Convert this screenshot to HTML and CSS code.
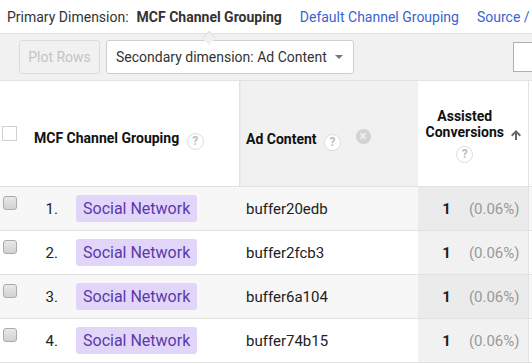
FILE: index.html
```html
<!DOCTYPE html>
<html lang="en">

<head>
    <meta charset="UTF-8">
    <title>MCF Channel Grouping</title>
    <link rel="stylesheet" href="styles.css">
</head>

<body>
    <div class="dimension-bar">
        <span class="dimension-label">Primary Dimension:</span>
        <span class="dimension-item selected">MCF Channel Grouping</span>
        <a class="dimension-item">Default Channel Grouping</a>
        <a class="dimension-item">Source / Medium</a>
    </div>

    <div class="toolbar">
        <button class="plot-btn" disabled>Plot Rows</button>
        <div class="secondary-select">
            <span>Secondary dimension: Ad Content</span>
            <span class="caret"></span>
        </div>
        <div class="search-box"></div>
    </div>

    <table class="report">
        <colgroup>
            <col class="col-check">
            <col class="col-num">
            <col class="col-channel">
            <col class="col-ad">
            <col class="col-assisted">
            <col class="col-next">
        </colgroup>
        <thead>
            <tr>
                <th class="head-check"><span class="box"></span></th>
                <th colspan="2" class="head-label">MCF Channel Grouping <span class="help">?</span></th>
                <th class="head-label secondary">Ad Content <span class="help">?</span> <span class="remove">&times;</span></th>
                <th class="head-sorted">
                    <div class="sorted-wrap">
                        <div class="sorted-text">Assisted<br>Conversions<br><span class="help">?</span></div>
                        <svg class="sort-arrow" width="12" height="12" viewBox="0 0 12 12"><path d="M6 1 L1 6 L2.4 7.4 L5 4.8 L5 11 L7 11 L7 4.8 L9.6 7.4 L11 6 Z" fill="#666"/></svg>
                    </div>
                </th>
                <th class="next"></th>
            </tr>
        </thead>
        <tbody id="table-body"></tbody>
    </table>

    <script>
        const rows = ['buffer20edb', 'buffer2fcb3', 'buffer6a104', 'buffer74b15'];
        const tableBody = document.getElementById('table-body');

        rows.forEach((ad, index) => {
            const row = tableBody.insertRow();
            row.innerHTML =
                '<td class="cell-check"><span class="row-box"></span></td>' +
                '<td class="cell-num">' + (index + 1) + '.</td>' +
                '<td class="cell-channel"><span class="chip">Social Network</span></td>' +
                '<td class="cell-ad">' + ad + '</td>' +
                '<td class="cell-sorted"><b>1</b><span class="pct">(0.06%)</span></td>' +
                '<td class="next"></td>';
        });
    </script>
</body>

</html>
```

FILE: styles.css
```css
body {
    font-family: 'Roboto', 'Liberation Sans', sans-serif;
    font-size: 14px;
    color: #222;
    margin: 0;
    background-color: #fff;
    overflow: hidden;
}

.dimension-bar {
    height: 33px;
    display: flex;
    align-items: center;
    padding-left: 7px;
    white-space: nowrap;
    border-bottom: 1px solid #e2e2e2;
}

.dimension-label {
    color: #333;
    margin-right: 8px;
}

.dimension-item {
    color: #3a64d0;
    margin-right: 18px;
    flex-shrink: 0;
}

.dimension-item.selected {
    color: #333;
    font-weight: bold;
    position: relative;
}

/* little notch pointing at the selected dimension */
.dimension-item.selected::after {
    content: "";
    position: absolute;
    left: 67px;
    top: 24px;
    width: 9px;
    height: 9px;
    background-color: #f1f1f1;
    border-top: 1px solid #dcdcdc;
    border-left: 1px solid #dcdcdc;
    transform: rotate(45deg);
}

.toolbar {
    height: 46px;
    background-color: #f1f1f1;
    display: flex;
    align-items: center;
    padding-left: 19px;
    border-bottom: 1px solid #e2e2e2;
    white-space: nowrap;
}

.plot-btn {
    flex-shrink: 0;
    font-family: inherit;
    font-size: 14px;
    width: 81px;
    height: 34px;
    padding: 0;
    color: #c4c4c4;
    background-color: #f1f1f1;
    border: 1px solid #dcdcdc;
    border-radius: 3px;
}

.secondary-select {
    flex-shrink: 0;
    margin-left: 6px;
    width: 248px;
    height: 34px;
    box-sizing: border-box;
    background-color: #fff;
    border: 1px solid #cfcfcf;
    border-radius: 3px;
    display: flex;
    align-items: center;
    justify-content: space-between;
    padding: 0 10px 0 9px;
    color: #333;
}

.caret {
    width: 0;
    height: 0;
    border-left: 4px solid transparent;
    border-right: 4px solid transparent;
    border-top: 4px solid #777;
}

.search-box {
    flex-shrink: 0;
    margin-left: 159px;
    width: 40px;
    height: 28px;
    background-color: #fff;
    border: 1px solid #b0b0b0;
}

.report {
    border-collapse: collapse;
    table-layout: fixed;
    width: 600px;
}

.col-check { width: 34px; }
.col-num { width: 36px; }
.col-channel { width: 169px; }
.col-ad { width: 179px; }
.col-assisted { width: 110px; }
.col-next { width: 72px; }

th {
    height: 93px;
    padding: 0;
    text-align: left;
    font-weight: bold;
    color: #111;
    border-bottom: 1px solid #e2e2e2;
    vertical-align: middle;
}

.head-check {
    padding-left: 2px;
}

.box {
    display: block;
    width: 13px;
    height: 13px;
    border: 1px solid #d0d0d0;
    background-color: #fff;
}

.head-label {
    padding-top: 12px;
}

.head-label.secondary {
    background-color: #f1f1f1;
    padding-left: 7px;
    box-shadow: inset 2px 0 2px -1px #dcdcdc;
}

.help {
    display: inline-block;
    width: 15px;
    height: 15px;
    border: 1.5px solid #dcdcdc;
    border-radius: 50%;
    color: #bdbdbd;
    font-size: 12px;
    font-weight: bold;
    line-height: 15px;
    text-align: center;
    margin-left: 4px;
    vertical-align: -2px;
    background-color: #fff;
}

.remove {
    display: inline-block;
    width: 15px;
    height: 15px;
    border-radius: 50%;
    background-color: #d2d2d2;
    color: #eee;
    font-size: 14px;
    line-height: 15px;
    text-align: center;
    margin-left: 11px;
    vertical-align: 3px;
}

.head-sorted {
    padding-top: 4px;
}

.sorted-wrap {
    display: flex;
    justify-content: center;
    align-items: flex-start;
    padding-left: 2px;
}

.sorted-text {
    text-align: center;
    line-height: 16px;
}

.sorted-text .help {
    margin: 6px 0 0 0;
}

.sort-arrow {
    margin-left: 6px;
    margin-top: 21px;
}

.next {
    border-left: 1px solid #e2e2e2;
}

td {
    height: 43px;
    padding: 0;
    border-bottom: 1px solid #e2e2e2;
    color: #222;
    font-size: 15px;
    vertical-align: middle;
}

tbody tr:nth-child(odd) td {
    background-color: #f7f7f7;
}

.cell-check {
    vertical-align: top;
    padding-left: 3px;
}

.row-box {
    display: block;
    margin-top: 9px;
    width: 12px;
    height: 12px;
    border: 1px solid #ababab;
    border-radius: 3px;
    background: linear-gradient(#e8e8e8, #d2d2d2);
}

.cell-num {
    text-align: right;
    padding-right: 12px;
}

.cell-channel {
    padding-left: 6px;
}

.chip {
    display: inline-block;
    font-size: 16px;
    background-color: #e1d5fa;
    color: #5a3aa8;
    padding: 0 7px;
    line-height: 27px;
    border-radius: 3px;
    vertical-align: middle;
}

.cell-ad {
    padding-left: 7px;
}

.cell-sorted {
    text-align: right;
    padding-right: 8px;
    white-space: nowrap;
}

tbody tr td.cell-sorted {
    background-color: #f1f1f1;
}

tbody tr:nth-child(odd) td.cell-sorted {
    background-color: #ebebeb;
}

.pct {
    color: #999;
    margin-left: 18px;
}
```
